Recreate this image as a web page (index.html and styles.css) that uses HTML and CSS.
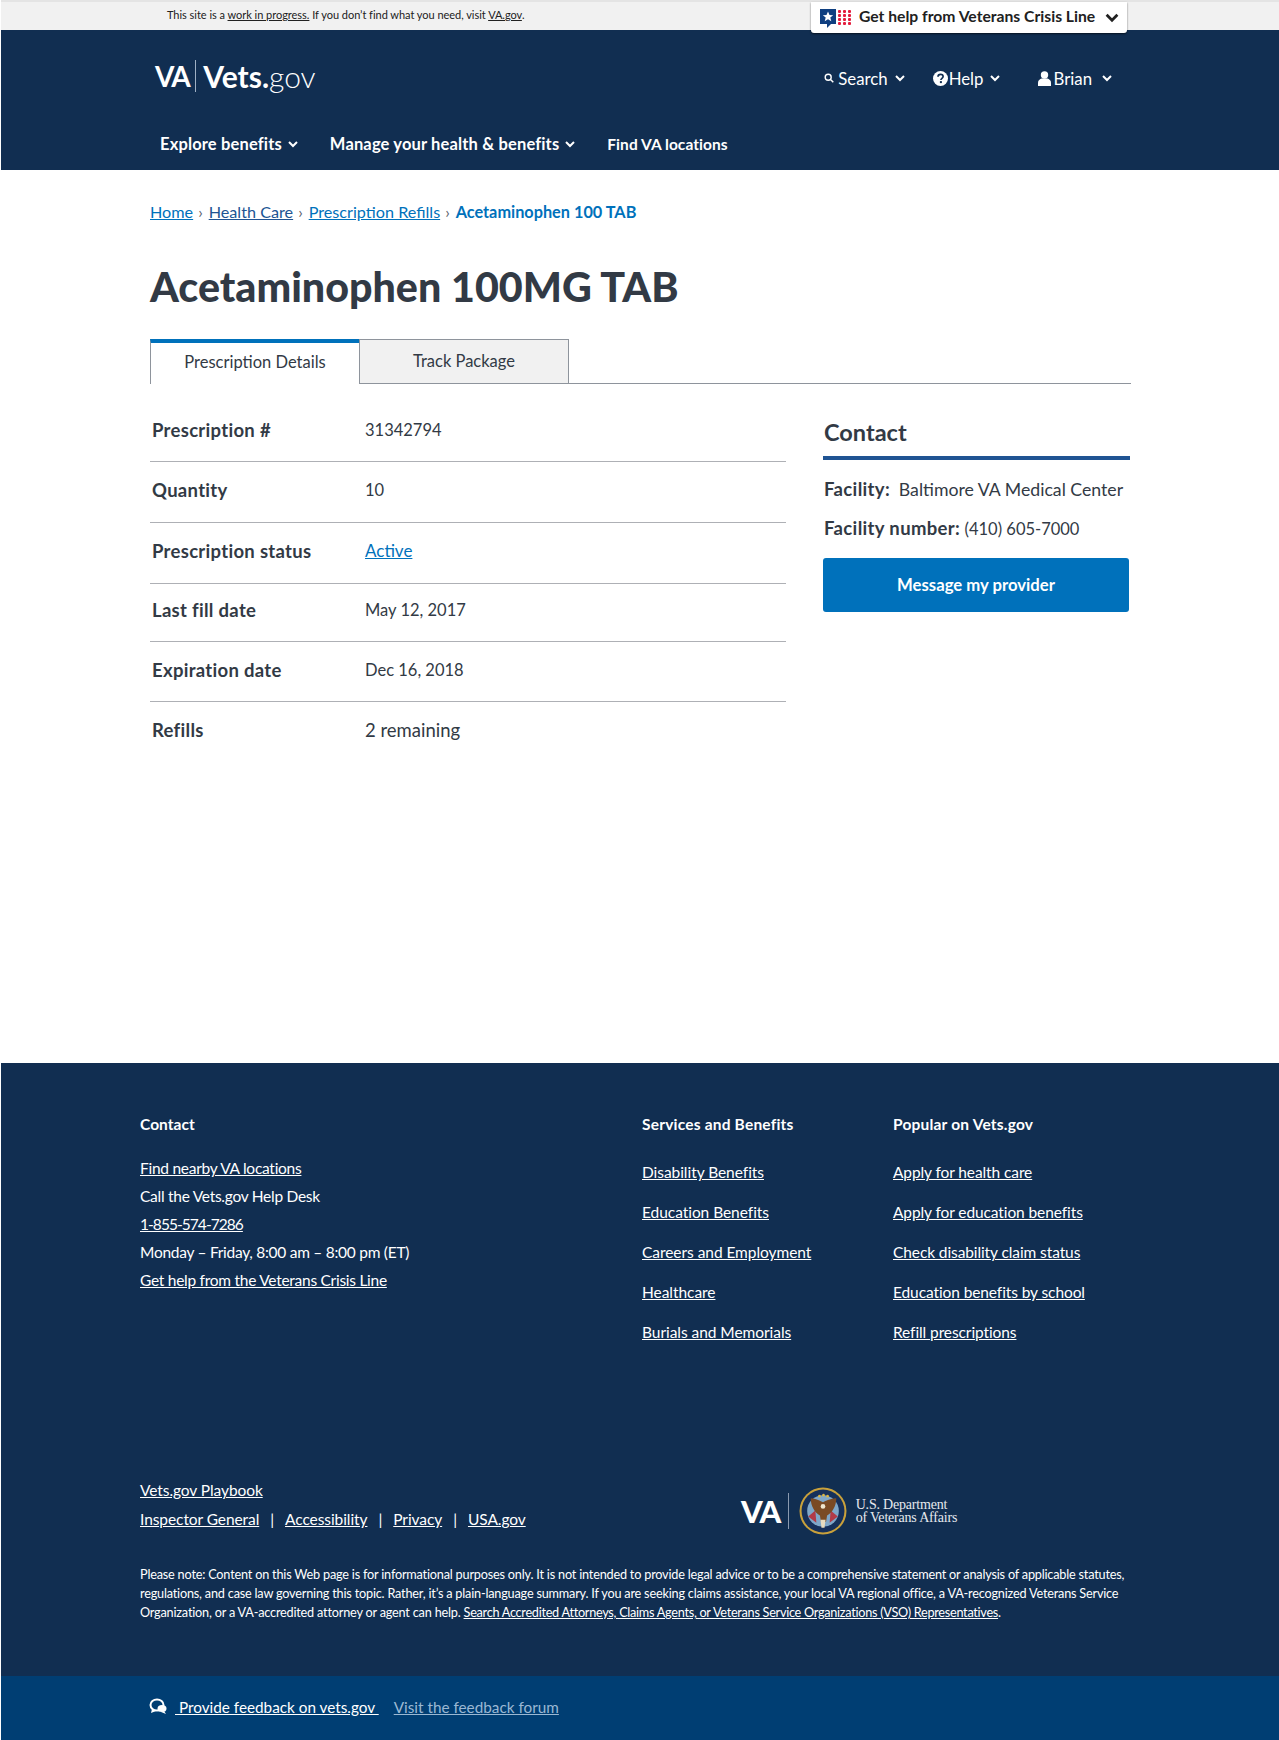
FILE: index.html
```html
<!DOCTYPE html>
<html lang="en">
<head>
<meta charset="utf-8">
<title>Acetaminophen 100MG TAB</title>
<link rel="stylesheet" href="styles.css">
</head>
<body>
<div class="notice">
  <div class="notice-text">This site is a <a href="#">work in progress.</a> If you don’t find what you need, visit <a href="#">VA.gov</a>.</div>
  <button class="crisis">
    <svg class="crisis-icon" width="33" height="26" viewBox="0 0 33 26"><path d="M0 0h16v15h-5l-4 4v-4H0z" fill="#0f3f80"/><path d="M8 2.500l1.500 3.600 3.700.2-2.900 2.300 1 3.600L8 10.200l-3.300 2 1-3.600-2.900-2.300 3.700-.2z" fill="#fff"/><g fill="#e31c3d"><rect x="18" y="1" width="3" height="3" rx="1"/><rect x="23" y="1" width="3" height="3" rx="1"/><rect x="28" y="1" width="3" height="3" rx="1"/><rect x="18" y="5" width="3" height="3" rx="1"/><rect x="23" y="5" width="3" height="3" rx="1"/><rect x="28" y="5" width="3" height="3" rx="1"/><rect x="18" y="9" width="3" height="3" rx="1"/><rect x="23" y="9" width="3" height="3" rx="1"/><rect x="28" y="9" width="3" height="3" rx="1"/><rect x="18" y="13" width="3" height="3" rx="1"/><rect x="23" y="13" width="3" height="3" rx="1"/><rect x="28" y="13" width="3" height="3" rx="1"/></g></svg>
    <span>Get help from Veterans Crisis Line</span>
    <svg class="chev-lg" width="14" height="10" viewBox="0 0 13 9"><path d="M1.500 1.500l5 5 5-5" fill="none" stroke="#212121" stroke-width="2.600"/></svg>
  </button>
</div>

<header class="masthead">
  <div class="mast-top">
    <a class="logo" href="#"><span class="logo-va">VA</span><span class="logo-bar"></span><span class="logo-vets">Vets.</span><span class="logo-gov">gov</span></a>
    <nav class="utility">
      <a class="util util-search" href="#"><svg width="10" height="10" viewBox="0 0 10 10"><circle cx="4.200" cy="4.200" r="3" fill="none" stroke="#fff" stroke-width="1.400"/><path d="M6.500 6.500L9.300 9.300" stroke="#fff" stroke-width="1.500"/></svg><span>Search</span><svg class="chev" width="10" height="7" viewBox="0 0 10 7"><path d="M1 1l4 4 4-4" fill="none" stroke="#fff" stroke-width="2"/></svg></a>
      <a class="util util-help" href="#"><svg width="15" height="15" viewBox="0 0 15 15"><circle cx="7.500" cy="7.500" r="7.500" fill="#fff"/><path d="M5 5.800c0-1.500 1.100-2.400 2.600-2.400s2.500.9 2.500 2.100c0 1.800-2.200 1.800-2.200 3.500" fill="none" stroke="#112e51" stroke-width="1.700"/><rect x="6.900" y="10.100" width="2" height="2" fill="#112e51"/></svg><span>Help</span><svg class="chev" width="10" height="7" viewBox="0 0 10 7"><path d="M1 1l4 4 4-4" fill="none" stroke="#fff" stroke-width="2"/></svg></a>
      <a class="util util-user" href="#"><svg width="13" height="15" viewBox="0 0 13 15"><circle cx="6.500" cy="4" r="3.700" fill="#fff"/><path d="M0 15v-3.500C0 9.500 2 8 3.500 7.500h6C11 8 13 9.500 13 11.500V15z" fill="#fff"/></svg><span>Brian</span><svg class="chev" width="10" height="7" viewBox="0 0 10 7"><path d="M1 1l4 4 4-4" fill="none" stroke="#fff" stroke-width="2"/></svg></a>
    </nav>
  </div>
  <nav class="mainnav">
    <a href="#">Explore benefits<svg class="chev" width="10" height="7" viewBox="0 0 10 7"><path d="M1 1l4 4 4-4" fill="none" stroke="#fff" stroke-width="2"/></svg></a>
    <a href="#">Manage your health &amp; benefits<svg class="chev" width="10" height="7" viewBox="0 0 10 7"><path d="M1 1l4 4 4-4" fill="none" stroke="#fff" stroke-width="2"/></svg></a>
    <a class="nav-find" href="#">Find VA locations</a>
  </nav>
</header>

<main class="content">
  <div class="crumbs">
    <a href="#">Home</a><span class="sep">›</span><a class="dark" href="#">Health Care</a><span class="sep">›</span><a href="#">Prescription Refills</a><span class="sep">›</span><strong>Acetaminophen 100 TAB</strong>
  </div>
  <h1>Acetaminophen 100MG TAB</h1>
  <div class="tabs">
    <div class="tab tab-active">Prescription Details</div>
    <div class="tab">Track Package</div>
  </div>
  <div class="detail">
    <div class="rx">
      <div class="row r1"><b>Prescription #</b><span class="num">31342794</span></div>
      <div class="row r2"><b>Quantity</b><span class="num">10</span></div>
      <div class="row r3"><b>Prescription status</b><span><a href="#">Active</a></span></div>
      <div class="row r4"><b>Last fill date</b><span class="num">May 12, 2017</span></div>
      <div class="row r5"><b>Expiration date</b><span class="num">Dec 16, 2018</span></div>
      <div class="row r6"><b>Refills</b><span class="word">2 remaining</span></div>
    </div>
    <aside class="contact">
      <h2>Contact</h2>
      <p class="fac fac-1"><b>Facility:</b>&nbsp; <span class="fac-name">Baltimore VA Medical Center</span></p>
      <p class="fac fac-2"><b>Facility number:</b> <span class="num">(410) 605-7000</span></p>
      <a class="btn" href="#">Message my provider</a>
    </aside>
  </div>
</main>

<footer class="footer">
  <div class="cols">
    <div class="col col-contact">
      <h3>Contact</h3>
      <ul>
        <li><a href="#">Find nearby VA locations</a></li>
        <li>Call the Vets.gov Help Desk</li>
        <li><a class="phone" href="#">1-855-574-7286</a></li>
        <li>Monday – Friday, 8:00 am – 8:00 pm (ET)</li>
        <li><a href="#">Get help from the Veterans Crisis Line</a></li>
      </ul>
    </div>
    <div class="col col-svc">
      <h3>Services and Benefits</h3>
      <ul class="spaced">
        <li><a href="#">Disability Benefits</a></li>
        <li><a href="#">Education Benefits</a></li>
        <li><a href="#">Careers and Employment</a></li>
        <li><a href="#">Healthcare</a></li>
        <li><a href="#">Burials and Memorials</a></li>
      </ul>
    </div>
    <div class="col col-pop">
      <h3>Popular on Vets.gov</h3>
      <ul class="spaced">
        <li><a href="#">Apply for health care</a></li>
        <li><a href="#">Apply for education benefits</a></li>
        <li><a href="#">Check disability claim status</a></li>
        <li><a href="#">Education benefits by school</a></li>
        <li><a href="#">Refill prescriptions</a></li>
      </ul>
    </div>
  </div>
  <div class="legal">
    <div class="legal-links">
      <div class="ll"><a href="#">Vets.gov Playbook</a></div>
      <div class="ll ll-row"><a href="#">Inspector General</a><i>|</i><a href="#">Accessibility</a><i>|</i><a href="#">Privacy</a><i>|</i><a href="#">USA.gov</a></div>
    </div>
    <div class="dept">
      <span class="dept-va">VA</span><span class="dept-bar"></span>
      <svg class="seal" width="48" height="48" viewBox="0 0 47 47">
        <circle cx="23.500" cy="23.500" r="23" fill="#c9a13b"/>
        <circle cx="23.500" cy="23.500" r="21" fill="#16305a"/>
        <circle cx="23.500" cy="23.500" r="15.500" fill="#7fa7c9"/>
        <path d="M9 29l7-6 1 12zM38 29l-7-6-1 12z" fill="#b23a48"/>
        <path d="M23.500 15c-5-3-9-4-12-4 0 8 4 14 9 17l1 6h5l1-6c5-3 9-9 9-17-3 0-8 1-13 4z" fill="#7a4a24"/>
        <circle cx="23.500" cy="19" r="2.300" fill="#efe6cf"/>
        <path d="M21 32h5l-1 8h-3z" fill="#e8dcc0"/>
        <g fill="#d9b545"><circle cx="20" cy="9" r="1.300"/><circle cx="24" cy="8" r="1.300"/><circle cx="28" cy="9" r="1.300"/></g>
      </svg>
      <div class="dept-name">U.S. Department<br>of Veterans Affairs</div>
    </div>
  </div>
  <p class="note">Please note: Content on this Web page is for informational purposes only. It is not intended to provide legal advice or to be a comprehensive statement or analysis of applicable statutes, regulations, and case law governing this topic. Rather, it’s a plain-language summary. If you are seeking claims assistance, your local VA regional office, a VA-recognized Veterans Service Organization, or a VA-accredited attorney or agent can help. <a href="#">Search Accredited Attorneys, Claims Agents, or Veterans Service Organizations (VSO) Representatives</a>.</p>
  <div class="feedback">
    <svg width="19" height="17" viewBox="0 0 19 17"><ellipse cx="8" cy="7" rx="6.500" ry="5.500" fill="none" stroke="#fff" stroke-width="2"/><path d="M3 11l-1 4 5-2z" fill="#fff"/><ellipse cx="13" cy="10.500" rx="4.500" ry="3.500" fill="#fff"/><path d="M15 13l2 3-5-2z" fill="#fff"/></svg>
    <a class="fb-main" href="#">&nbsp;Provide feedback on vets.gov&nbsp;</a>
    <a class="fb-alt" href="#">Visit the feedback forum</a>
  </div>
</footer>
</body>
</html>
```

FILE: styles.css
```css
* { box-sizing: border-box; }
html, body { margin: 0; padding: 0; }
body { font-family: "Lato", "Liberation Sans", sans-serif; color: #323a45; background: #fff; font-size: 17px; height: 1740px; overflow: hidden; display: flex; flex-direction: column; border-left: 1px solid #fff; }
a { color: inherit; }
.notice { height: 30px; flex: none; background: #f1f1f1; border-top: 2px solid #e4e4e4; display: flex; font-size: 11px; letter-spacing: -.03px; color: #212121; padding-left: 166px; position: relative; }
.notice-text { line-height: 26px; }
.crisis { position: absolute; left: 810px; top: 0; width: 316px; height: 31px; background: #fff; border: 0; border-radius: 0 0 3px 3px; box-shadow: 0 1px 2px rgba(0,0,0,.6); display: flex; align-items: center; padding: 0 8px 0 9px; font: 700 15.700px "Lato", sans-serif; color: #212121; z-index: 2; }
.crisis-icon { margin-right: 6px; margin-top: 8px; flex: none; }
.crisis span { flex: 1; text-align: left; white-space: nowrap; padding-bottom: 3px; }
.masthead { height: 140px; flex: none; background: #112e51; color: #fff; padding-left: 153px; padding-right: 130px; }
.mast-top { height: 92px; display: flex; justify-content: space-between; align-items: center; }
.logo { text-decoration: none; display: flex; align-items: center; font-size: 30px; color: #fff; padding-left: 1px; }
.logo-va { font-weight: 700; letter-spacing: -1.500px; font-size: 28px; }
.logo-bar { width: 1px; height: 32px; background: #9fb0c4; margin: 0 7px 0 6px; }
.logo-vets { font-weight: 700; }
.logo-gov { font-weight: 300; }
.utility { display: flex; align-items: center; font-size: 16.800px; margin-right: 34px; padding-top: 4px; }
.util { display: flex; align-items: center; text-decoration: none; color: #fff; }
.util span { margin-left: 4px; }
.util-search { margin-right: 28px; }
.util-help { margin-right: 38px; }
.util-help span { margin-left: 1px; }
.util-user { margin-right: 3px; }
.util-user span { margin-left: 2px; }
.chev { margin-left: 7px; }
.util-user .chev { margin-left: 10px; }
.mainnav { display: flex; font-size: 16.500px; letter-spacing: .15px; font-weight: 700; padding-left: 6px; padding-top: 10px; }
.mainnav a { color: #fff; text-decoration: none; display: flex; align-items: center; height: 24px; margin-right: 32px; }
.mainnav .nav-find { font-size: 15.500px; letter-spacing: .05px; }
.mainnav .chev { margin-left: 6px; }
.content { flex: 1; padding: 30px 148px 0 149px; }
.crumbs { font-size: 16.200px; line-height: 24px; color: #0071bb; display: flex; align-items: baseline; }
.crumbs a { color: #0071bb; }
.crumbs a.dark { color: #205493; }
.crumbs .sep { color: #5b616b; margin: 0 6px 0 5px; font-size: 16px; }
.crumbs strong { font-weight: 700; font-size: 16.300px; }
h1 { font-size: 41.200px; line-height: 48px; font-weight: 900; margin: 38px 0 29px; color: #323a45; white-space: nowrap; }
.tabs { display: flex; height: 45px; border-bottom: 1px solid #8e949c; }
.tab { width: 210px; height: 45px; border: 1px solid #8e949c; background: #f1f1f1; text-align: center; line-height: 42px; font-size: 16.500px; color: #323a45; }
.tab-active { background: #fff; border-width: 4px 0 0 1px; border-top-color: #0071bb; border-bottom: 0; line-height: 38px; width: 209px; position: relative; }
.detail { display: flex; padding-top: 17px; }
.rx { width: 636px; }
.row { display: flex; align-items: flex-start; border-bottom: 1px solid #aeb0b5; font-size: 17px; line-height: 24px; padding-left: 2px; }
.row:last-child { border-bottom: 0; }
.r1 { height: 61px; padding-top: 17px; }
.r2 { height: 61px; padding-top: 16px; }
.r3 { height: 61px; padding-top: 16px; }
.r4 { height: 58px; padding-top: 14px; }
.r5 { height: 60px; padding-top: 16px; }
.r6 { height: 60px; padding-top: 16px; }
.row b { width: 213px; font-weight: 700; flex: none; font-size: 18.500px; letter-spacing: .3px; }
.row a { color: #0071bb; }
.row .num, .fac .num { font-size: 16.500px; }
.row .word { font-size: 18.500px; }
.contact { margin-left: 37px; width: 307px; padding-top: 12px; }
h2 { margin: 0; font-size: 23.500px; line-height: 30px; padding: 4px 0 9px 1px; border-bottom: 4px solid #205493; font-weight: 700; }
.fac { margin: 0; font-size: 17px; line-height: 24px; padding-left: 1px; white-space: nowrap; }
.fac b { font-size: 18.500px; letter-spacing: .35px; }
.fac-name { font-size: 17.700px; }
.fac-1 { margin-top: 17px; }
.fac-2 { margin-top: 14px; }
.btn { display: block; margin-top: 17px; width: 306px; height: 54px; border-radius: 3px; background: #0071bb; color: #fff; font-weight: 700; text-align: center; line-height: 54px; text-decoration: none; font-size: 16.700px; }
.footer { background: #112e51; color: #fff; height: 677px; flex: none; position: relative; padding: 51px 0 0 139px; font-size: 15.500px; }
.cols { display: flex; height: 362px; }
.col h3 { margin: 0; font-size: 15.500px; line-height: 20px; font-weight: 700; letter-spacing: .2px; }
.col-contact { width: 502px; letter-spacing: -.27px; }
.col-contact h3 { letter-spacing: .05px; }
.phone { letter-spacing: -.95px; }
.col-svc { width: 251px; letter-spacing: -.05px; }
.col-pop { letter-spacing: -.1px; }
.col ul { list-style: none; margin: 0; padding: 0; }
.col-contact ul { margin-top: 20px; }
.col-contact li { line-height: 28px; }
.spaced { margin-top: 26px !important; }
.spaced li { line-height: 24px; margin-bottom: 16px; }
.legal { display: flex; height: 89px; letter-spacing: -.08px; }
.legal-links { width: 601px; padding-top: 0; }
.ll { line-height: 29px; }
.ll i { font-style: normal; margin: 0 11px; }
.dept { display: flex; align-items: center; height: 48px; margin-top: 11px; }
.dept-va { font-size: 31px; font-weight: 900; letter-spacing: -1.500px; }
.dept-bar { width: 1px; height: 36px; background: #8a9ab0; margin: 0 10px 0 8px; }
.seal { margin-right: 9px; flex: none; }
.dept-name { font-family: "Liberation Serif", serif; font-size: 14px; line-height: 13px; letter-spacing: -.2px; color: #e6e9ee; }
.note { margin: 0; width: 995px; font-size: 12.700px; letter-spacing: -.2px; line-height: 19px; }
.note a { letter-spacing: -.28px; }
.feedback { position: absolute; left: 0; right: 0; bottom: 0; height: 64px; background: #003e73; display: flex; align-items: center; padding: 0 0 3px 148px; font-size: 15.300px; }
.fb-main { margin-left: 7px; color: #fff; }
.fb-alt { margin-left: 15px; color: #9bb8d3; }
```
